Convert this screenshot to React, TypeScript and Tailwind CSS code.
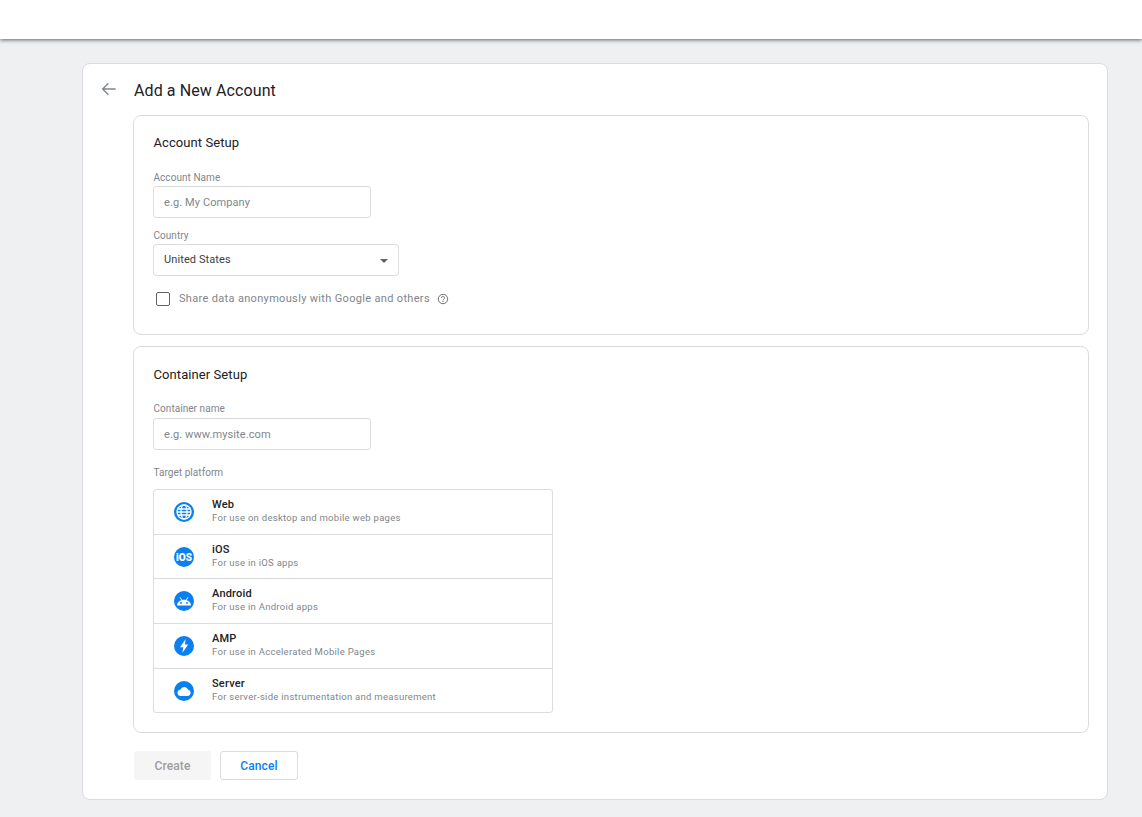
import React from 'react';

const platforms = [
  { name: 'Web', desc: 'For use on desktop and mobile web pages', icon: 'web' },
  { name: 'iOS', desc: 'For use in iOS apps', icon: 'ios' },
  { name: 'Android', desc: 'For use in Android apps', icon: 'android' },
  { name: 'AMP', desc: 'For use in Accelerated Mobile Pages', icon: 'amp' },
  { name: 'Server', desc: 'For server-side instrumentation and measurement', icon: 'server' },
];

const PlatformIcon = ({ icon }: { icon: string }) => {
  return (
    <svg width="20" height="20" viewBox="0 0 20 20" className="shrink-0">
      <circle cx="10" cy="10" r="10" fill="#0a7ff0" />
      {icon === 'web' && (
        <g fill="none" stroke="#fff" strokeWidth="1.3">
          <circle cx="10" cy="10" r="7" />
          <ellipse cx="10" cy="10" rx="3" ry="7" />
          <path d="M3 10h14M4 7h12M4 13h12" />
        </g>
      )}
      {icon === 'ios' && (
        <text x="10" y="13.500" textAnchor="middle" fill="#fff" fontSize="10" fontWeight="900" fontFamily="Roboto, sans-serif">
          iOS
        </text>
      )}
      {icon === 'android' && (
        <g fill="#fff">
          <path d="M3 14.500c.1-3.300 3-5.800 7-5.800s6.900 2.500 7 5.800H3z" />
          <path d="M6 6.300l1.700 2.700M14 6.300l-1.700 2.700" stroke="#fff" strokeWidth="0.9" />
          <circle cx="7" cy="12" r="0.9" fill="#0a7ff0" />
          <circle cx="13" cy="12" r="0.9" fill="#0a7ff0" />
        </g>
      )}
      {icon === 'amp' && <path d="M11.800 3L6 11.200h3.300L8.300 17l5.900-8.400h-3.400l1-5.600z" fill="#fff" />}
      {icon === 'server' && (
        <path
          d="M6.700 15a3.200 3.200 0 0 1-.4-6.370A4.300 4.300 0 0 1 14.200 8.800a3.150 3.150 0 0 1-.3 6.200H6.700z"
          fill="#fff"
        />
      )}
    </svg>
  );
};

const App: React.FC = () => {
  return (
    <div className="min-h-[817px] bg-[#eff0f2] font-['Roboto',sans-serif] overflow-hidden">
      <div className="h-[39px] bg-white shadow-[0_1px_4px_rgba(0,0,0,0.6)]" />
      <div className="ml-[82px] mr-[34px] mt-[24px] h-[737px] rounded-lg border border-[#dadce0] bg-white">
        <div className="flex h-[51px] items-center pl-[18px]">
          <svg width="16" height="16" viewBox="0 0 24 24" fill="none" stroke="#80868b" strokeWidth="2" className="mb-[2px]">
            <path d="M22 12H3M11 3.500L2.500 12l8.500 8.500" />
          </svg>
          <h1 className="ml-[17px] mt-[2px] text-[16px] leading-[20px] tracking-[0.1px] text-[#202124]">Add a New Account</h1>
        </div>

        <section className="ml-[50px] mr-[18px] h-[220px] rounded-lg border border-[#dadce0] pl-[19px] pt-[19px]">
          <h2 className="ml-[0.5px] text-[13px] leading-[16px] tracking-[0.08px] text-[#202124]">Account Setup</h2>
          <div className="ml-[0.5px] mt-[21px] text-[10px] leading-[12px] tracking-[0.05px] text-[#80868b]">Account Name</div>
          <div className="mt-[2px] flex h-[32px] w-[218px] items-center rounded-[3px] border border-[#dadce0] pl-[10px] pt-[2px] text-[11px] tracking-[0.1px] text-[#80868b]">
            e.g. My Company
          </div>
          <div className="ml-[0.5px] mt-[12px] text-[10px] leading-[12px] tracking-[0.05px] text-[#80868b]">Country</div>
          <div className="mt-[2px] flex h-[32px] w-[246px] items-center justify-between rounded-[3px] border border-[#dadce0] pl-[10px] pr-[10px] text-[11px] tracking-[0.1px] text-[#3c4043]">
            <span>United States</span>
            <span className="mt-[2px] h-0 w-0 border-x-[4px] border-t-[4px] border-x-transparent border-t-[#5f6368]" />
          </div>
          <div className="ml-[3px] mt-[15px] flex items-center">
            <span className="h-[14px] w-[14px] rounded-[2px] border border-[#5f6368]" />
            <span className="ml-[9px] mt-[1px] text-[11px] leading-[14px] tracking-[0.33px] text-[#80868b]">
              Share data anonymously with Google and others
            </span>
            <svg width="12" height="12" viewBox="0 0 12 12" fill="none" stroke="#5f6368" className="ml-[7px]">
              <circle cx="6" cy="6" r="4.700" strokeWidth="0.9" />
              <path d="M4.500 4.900a1.500 1.500 0 1 1 2.300 1.200c-.6.4-.8.600-.8 1.200" strokeWidth="0.9" />
              <path d="M6 8v1" strokeWidth="0.9" />
            </svg>
          </div>
        </section>

        <section className="ml-[50px] mr-[18px] mt-[11px] h-[387px] rounded-lg border border-[#dadce0] pl-[19px] pt-[20px]">
          <h2 className="ml-[0.5px] text-[13px] leading-[16px] tracking-[0.08px] text-[#202124]">Container Setup</h2>
          <div className="ml-[0.5px] mt-[20px] text-[10px] leading-[12px] tracking-[0.05px] text-[#80868b]">Container name</div>
          <div className="mt-[3px] flex h-[32px] w-[218px] items-center rounded-[3px] border border-[#dadce0] pl-[10px] pt-[2px] text-[11px] tracking-[0.1px] text-[#80868b]">
            e.g. www.mysite.com
          </div>
          <div className="ml-[0.5px] mt-[17px] text-[10px] leading-[12px] tracking-[0.05px] text-[#80868b]">Target platform</div>
          <div className="mt-[10px] h-[224px] w-[400px] divide-y divide-[#dadce0] rounded-[3px] border border-[#dadce0]">
            {platforms.map((p) => (
              <div key={p.name} className="flex h-[44.7px] items-center pl-[19.5px]">
                <PlatformIcon icon={p.icon} />
                <div className="ml-[18.5px] pb-[1.5px]">
                  <div className="text-[11px] font-medium leading-[14px] tracking-[0.2px] text-[#202124]">{p.name}</div>
                  <div className="text-[9.5px] leading-[12px] tracking-[0.28px] text-[#80868b]">{p.desc}</div>
                </div>
              </div>
            ))}
          </div>
        </section>

        <div className="ml-[51px] mt-[18px] flex gap-[9px]">
          <button className="h-[29px] w-[77px] rounded-[3px] bg-[#f5f5f5] pt-[1px] pb-[0.5px] text-[12px] font-medium tracking-[0.1px] text-[#9e9e9e]">
            Create
          </button>
          <button className="h-[29px] w-[78px] rounded-[3px] border border-[#dadce0] bg-white pt-[1px] pb-[0.5px] text-[12px] font-medium tracking-[0.1px] text-[#0a7ff0]">
            Cancel
          </button>
        </div>
      </div>
    </div>
  );
};

export default App;
